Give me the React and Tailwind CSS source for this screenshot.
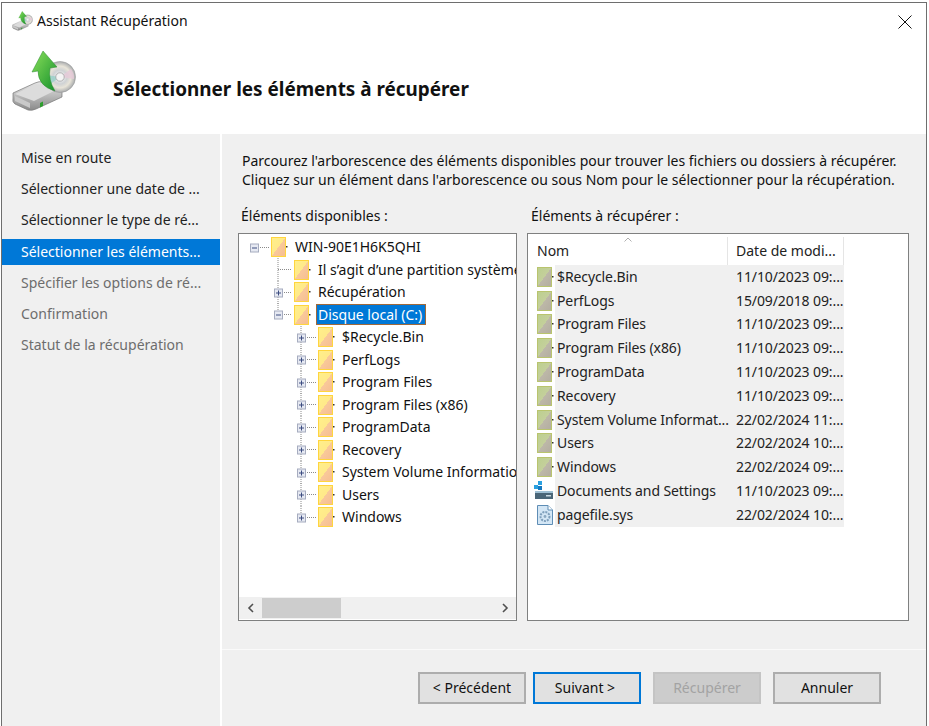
import React from "react";

function BackupIcon({ className, uid }) {
  return (
    <svg viewBox="0 0 64 62" className={className}>
      <defs>
        <linearGradient id={`hdd${uid}`} x1="0" y1="0" x2="0" y2="1">
          <stop offset="0" stopColor="#e8e8e8" />
          <stop offset="1" stopColor="#8a8a8a" />
        </linearGradient>
        <linearGradient id={`arr${uid}`} x1="0" y1="0" x2="1" y2="1">
          <stop offset="0" stopColor="#8be05a" />
          <stop offset="1" stopColor="#14902c" />
        </linearGradient>
        <radialGradient id={`cd${uid}`}>
          <stop offset="0" stopColor="#ffffff" />
          <stop offset="0.45" stopColor="#cfd2d4" />
          <stop offset="0.7" stopColor="#e8e4d8" />
          <stop offset="1" stopColor="#a9acae" />
        </radialGradient>
      </defs>
      <path d="M1 43 L23 33 Q27 31 31 32 L50 38 L50 47 L24 59 Q20 61 16 60 L3 54 Q0 52 1 48 Z" fill={`url(#hdd${uid})`} stroke="#777" strokeWidth="0.7" />
      <path d="M3 46 L18 53 L18 58 L3 51 Z" fill="#c9c9c9" />
      <path d="M3 44 L24 34 L44 40 L22 51 Z" fill="#dcdcdc" />
      <path d="M28 53 L31 51.5 L31 56 L28 57.5 Z" fill="#2f9e2f" />
      <circle cx="48" cy="27" r="15.5" fill={`url(#cd${uid})`} stroke="#999" strokeWidth="0.6" />
      <path d="M48 27 L37 35 A14 14 0 0 1 34 25 Z" fill="#8fd0c8" opacity="0.7" />
      <path d="M48 27 L59 19 A14 14 0 0 1 62 29 Z" fill="#e6c9d8" opacity="0.8" />
      <circle cx="48" cy="27" r="4.2" fill="#f4f4f4" stroke="#9a9a9a" strokeWidth="0.7" />
      <path d="M31 1 L45 17 L38 18 Q36 30 43 41 Q26 36 26 21 L20 22 Z" fill={`url(#arr${uid})`} stroke="#2a8a30" strokeWidth="0.5" />
    </svg>
  );
}

function Folder({ gray }) {
  const id = gray ? "fg" : "fy";
  return (
    <svg width="18" height="20" viewBox="0 0 18 20" className="shrink-0">
      <defs>
        <linearGradient id={id} x1="0" y1="0" x2="1" y2="1">
          {gray ? (
            <>
              <stop offset="0" stopColor="#bcd08e" />
              <stop offset="0.5" stopColor="#c4cf9c" />
              <stop offset="0.5" stopColor="#bdb8a8" />
              <stop offset="1" stopColor="#b3ada0" />
            </>
          ) : (
            <>
              <stop offset="0" stopColor="#fff08a" />
              <stop offset="0.5" stopColor="#ffe98a" />
              <stop offset="0.5" stopColor="#f9c99a" />
              <stop offset="1" stopColor="#f5bd92" />
            </>
          )}
        </linearGradient>
      </defs>
      <rect x="0.5" y="0.5" width="14" height="19" fill={`url(#${id})`} stroke={gray ? "#b9c46e" : "#ffd53e"} />
      <rect x="15" y="9" width="1.5" height="1.5" fill="#333" />
    </svg>
  );
}

function DocsIcon() {
  return (
    <svg width="20" height="20" viewBox="0 0 20 20" className="shrink-0">
      <rect x="4" y="0" width="4" height="4" fill="#2aa0e0" />
      <rect x="0" y="4" width="4" height="4" fill="#2aa0e0" />
      <rect x="4" y="5" width="4" height="4" fill="#1478c0" />
      <rect x="1" y="10" width="18" height="8" fill="#4a6678" />
      <rect x="1" y="10" width="18" height="2" fill="#9fc0d4" />
      <rect x="12" y="14" width="5" height="1.5" fill="#c8d8e0" />
    </svg>
  );
}

function PageIcon() {
  return (
    <svg width="18" height="20" viewBox="0 0 18 20" className="shrink-0">
      <path d="M1.5 0.5 H12 L16.5 5 V19.5 H1.5 Z" fill="#d3e6f5" stroke="#5e8db5" />
      <path d="M12 0.5 V5 H16.5" fill="#fff" stroke="#5e8db5" />
      <circle cx="9" cy="11.5" r="4.5" fill="none" stroke="#7fa0bc" strokeWidth="2" strokeDasharray="2 1" />
      <circle cx="9" cy="11.5" r="1.4" fill="#8aa8c0" />
    </svg>
  );
}

function Connector({ level, expander, vlines = [], branchFull }) {
  const w = [32, 55, 79][level];
  const cx = [15, 39, 62][level];
  return (
    <svg width={w} height="23" viewBox={`0 0 ${w} 23`} className="shrink-0 overflow-visible">
      {vlines.map(([x, a, b]) => (
        <line key={x} x1={x} x2={x} y1={a} y2={b} stroke="#8a8a8a" strokeDasharray="1 1" />
      ))}
      {branchFull && <line x1={cx} x2={cx} y1="0" y2="23" stroke="#8a8a8a" strokeDasharray="1 1" />}
      <line x1={cx + (expander ? 4 : 0)} x2={w - 2} y1="11.5" y2="11.5" stroke="#8a8a8a" strokeDasharray="1 1" />
      {expander && (
        <>
          <rect x={cx - 3.5} y="8" width="8" height="8" fill="#e6e9f2" stroke="#a6acbf" />
          <line x1={cx - 2} x2={cx + 3} y1="12" y2="12" stroke="#3c4c80" />
          {expander === "+" && <line x1={cx + 0.5} x2={cx + 0.5} y1="9.5" y2="14.5" stroke="#3c4c80" />}
        </>
      )}
    </svg>
  );
}

function TreeRow({ level, expander, text, selected, vlines, branchFull }) {
  return (
    <div className="flex h-[22.5px] items-center whitespace-nowrap">
      <Connector level={level} expander={expander} vlines={vlines} branchFull={branchFull} />
      <Folder />
      {selected ? (
        <span className="ml-[4px] flex h-[21px] items-center border border-[#a0693a] bg-[#0078d7] pl-[1px] pr-[3px] text-white">{text}</span>
      ) : (
        <span className="ml-[6px]">{text}</span>
      )}
    </div>
  );
}

const steps = [
  ["Mise en route", "n"],
  ["Sélectionner une date de ...", "n"],
  ["Sélectionner le type de ré...", "n"],
  ["Sélectionner les éléments...", "s"],
  ["Spécifier les options de ré...", "d"],
  ["Confirmation", "d"],
  ["Statut de la récupération", "d"],
];

const level2 = ["$Recycle.Bin", "PerfLogs", "Program Files", "Program Files (x86)", "ProgramData", "Recovery", "System Volume Information", "Users", "Windows"];

const files = [
  ["$Recycle.Bin", "11/10/2023 09:...", "f"],
  ["PerfLogs", "15/09/2018 09:...", "f"],
  ["Program Files", "11/10/2023 09:...", "f"],
  ["Program Files (x86)", "11/10/2023 09:...", "f"],
  ["ProgramData", "11/10/2023 09:...", "f"],
  ["Recovery", "11/10/2023 09:...", "f"],
  ["System Volume Informat...", "22/02/2024 11:...", "f"],
  ["Users", "22/02/2024 10:...", "f"],
  ["Windows", "22/02/2024 09:...", "f"],
  ["Documents and Settings", "11/10/2023 09:...", "d"],
  ["pagefile.sys", "22/02/2024 10:...", "p"],
];

function Btn({ children, primary, disabled }) {
  const cls = primary
    ? "border-2 border-[#0078d7] bg-[#e1e1e1] text-[#111]"
    : disabled
    ? "border-2 border-[#c4c4c4] bg-[#cccccc] text-[#a3a3a3]"
    : "border-2 border-[#adadad] bg-[#e1e1e1] text-[#111]";
  return <div className={`flex h-[32px] w-[108px] items-center justify-center ${cls}`}>{children}</div>;
}

export default function App() {
  return (
    <div className="h-[726px] w-[929px] overflow-hidden bg-white pl-px pr-[2px] pt-[2px] text-[14px] leading-[20px] text-[#1a1a1a]" style={{ fontFamily: '"Noto Sans", sans-serif' }}>
      <div className="flex h-full flex-col border-x border-t border-[#6e6e6e]">
        <div className="h-[131px] shrink-0 bg-white">
          <div className="flex h-[38px] items-center pb-[2px] pl-[10px] pr-[14px]">
            <BackupIcon uid="a" className="h-[20px] w-[21px]" />
            <span className="ml-[4px] flex-1 text-[#111]">Assistant Récupération</span>
            <svg width="14" height="14" viewBox="0 0 14 14" stroke="#111" strokeWidth="1" className="mt-[2px]">
              <path d="M0.5 0.5 L13.5 13.5 M13.5 0.5 L0.5 13.5" />
            </svg>
          </div>
          <div className="flex items-start pl-[10px] pt-[9px]">
            <BackupIcon uid="b" className="h-[62px] w-[64px] shrink-0" />
            <h1 className="ml-[37px] mt-[27px] whitespace-nowrap text-[18.9px] font-bold leading-[24px] text-[#111]">Sélectionner les éléments à récupérer</h1>
          </div>
        </div>
        <div className="flex min-h-0 flex-1">
          <div className="w-[218px] shrink-0 bg-[#f0f0f0] pt-[11px]">
            {steps.map(([t, k]) => (
              <div key={t} className={`mb-[5.2px] flex h-[26px] items-center whitespace-nowrap pl-[19px] ${k === "s" ? "bg-[#0078d7] text-white" : k === "d" ? "text-[#6d6d6d]" : "text-[#222]"}`}>{t}</div>
            ))}
          </div>
          <div className="ml-[2px] flex min-w-0 flex-1 flex-col bg-[#f0f0f0]">
            <div className="flex h-[516px] flex-col border-b border-[#fafafa] pl-[20px]">
              <p className="mt-[17px] whitespace-nowrap leading-[19px] text-[#111]">
                Parcourez l'arborescence des éléments disponibles pour trouver les fichiers ou dossiers à récupérer.
                <br />
                Cliquez sur un élément dans l'arborescence ou sous Nom pour le sélectionner pour la récupération.
              </p>
              <div className="-ml-[4px] mt-[17px] flex gap-[10px] pr-[17px]">
                <div className="flex w-[279px] shrink-0 flex-col">
                  <div className="h-[27px] pl-[3px] text-[#111]">Éléments disponibles :</div>
                  <div className="flex h-[388px] flex-col border border-[#7f8080] bg-white">
                    <div className="min-h-0 flex-1 overflow-hidden pt-[2px] text-[#111]">
                      <TreeRow level={0} expander="-" text="WIN-90E1H6K5QHI" />
                      <TreeRow level={1} text="Il s’agit d’une partition système" vlines={[[39, 0, 23]]} />
                      <TreeRow level={1} expander="+" text="Récupération" branchFull />
                      <TreeRow level={1} expander="-" text="Disque local (C:)" selected vlines={[[39, 0, 8]]} />
                      {level2.map((t, i) => (
                        <TreeRow key={t} level={2} expander="+" text={t} vlines={[[62, 0, i === level2.length - 1 ? 8 : 23]]} />
                      ))}
                    </div>
                    <div className="mb-[1px] flex h-[22px] shrink-0 items-center bg-[#f0f0f0]">
                      <div className="flex w-[23px] justify-center">
                        <svg width="8" height="10" viewBox="0 0 8 10" fill="none" stroke="#505050" strokeWidth="1.6"><path d="M6 1 L2 5 L6 9" /></svg>
                      </div>
                      <div className="h-[20px] w-[79px] bg-[#cdcdcd]" />
                      <div className="flex-1" />
                      <div className="flex w-[23px] justify-center">
                        <svg width="8" height="10" viewBox="0 0 8 10" fill="none" stroke="#505050" strokeWidth="1.6"><path d="M2 1 L6 5 L2 9" /></svg>
                      </div>
                    </div>
                  </div>
                </div>
                <div className="flex min-w-0 flex-1 flex-col">
                  <div className="h-[27px] pl-[4px] text-[#111]">Éléments à récupérer :</div>
                  <div className="h-[388px] border border-[#7f8080] bg-white text-[#222]">
                    <div className="flex h-[31px] w-[316px] items-center whitespace-nowrap pt-[3px]">
                      <div className="relative flex h-full w-[200px] items-center border-r border-[#e5e5e5] pl-[9px]">
                        Nom
                        <svg width="8" height="5" viewBox="0 0 8 5" fill="none" stroke="#b0b0b0" className="absolute left-[96px] top-[0px]"><path d="M0.5 4.5 L4 1 L7.5 4.5" /></svg>
                      </div>
                      <div className="flex h-full w-[116px] items-center border-r border-[#e5e5e5] pl-[8px]">Date de modi...</div>
                    </div>
                    {files.map(([n, d, k]) => (
                      <div key={n} className="flex h-[23.8px] w-[316px] items-center whitespace-nowrap">
                        <div className="flex w-[27px] shrink-0 justify-end pr-[1px]">
                          {k === "f" ? <div className="mr-[-1px]"><Folder gray /></div> : k === "d" ? <DocsIcon /> : <PageIcon />}
                        </div>
                        <div className="flex h-full flex-1 items-center bg-[#f0f0f0] pl-[2px]">
                          <span className="w-[171px] tracking-[-0.1px]">{n}</span>
                          <span className="pl-[8px] tracking-[-0.1px]">{d}</span>
                        </div>
                      </div>
                    ))}
                  </div>
                </div>
              </div>
            </div>
            <div className="flex flex-1 items-start gap-[7px] pl-[196px] pt-[22px]">
              <Btn>&lt; Précédent</Btn>
              <Btn primary><span className="-ml-[4px]">Suivant &gt;</span></Btn>
              <div className="ml-[5px]"><Btn disabled>Récupérer</Btn></div>
              <div className="ml-[5px]"><Btn>Annuler</Btn></div>
            </div>
          </div>
        </div>
      </div>
    </div>
  );
}
